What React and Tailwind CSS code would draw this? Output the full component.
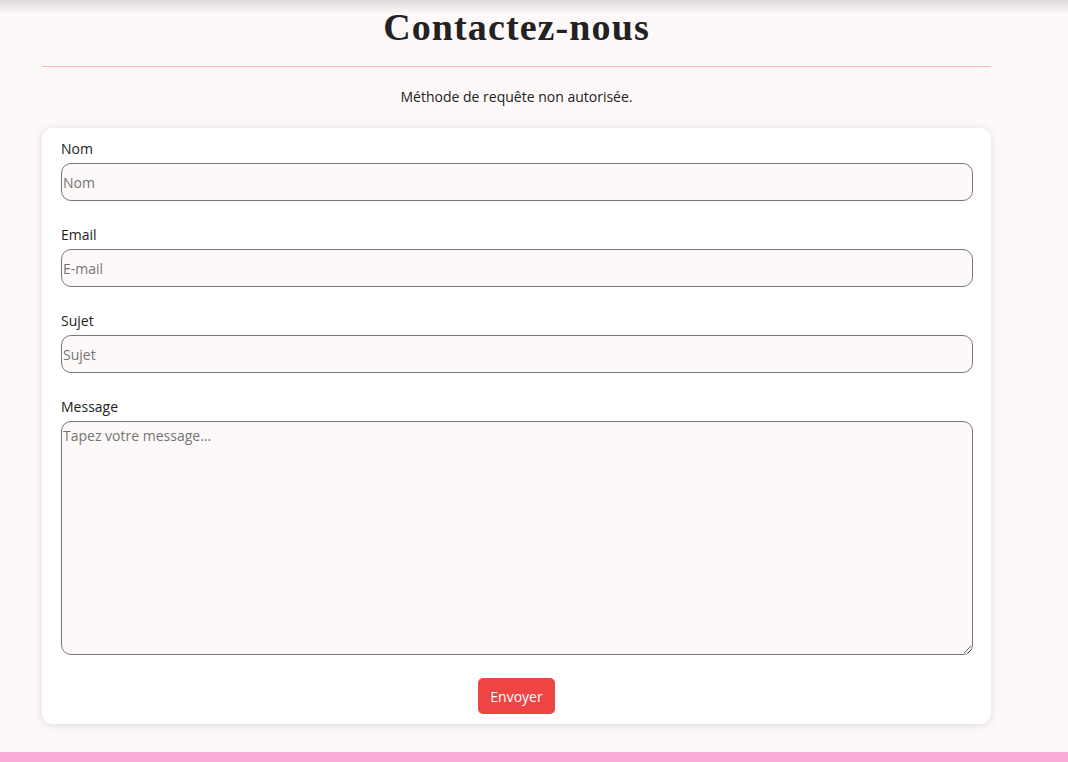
export default function App() {
  const body = { fontFamily: "'Open Sans', 'Noto Sans', sans-serif" };
  return (
    <div className="relative min-h-[762px] bg-[#fdf9f8] flex flex-col" style={body}>
      <div className="absolute left-0 right-0 top-0 h-[14px] bg-gradient-to-b from-[#dcdad9] to-[#fdf9f8]" />
      <div className="relative ml-[42px] w-[949px] flex flex-col flex-1">
        <h1
          className="text-center text-[38px] leading-[52px] font-bold tracking-[1.1px] text-[#222222] pt-[1px]"
          style={{ fontFamily: "'Liberation Serif', 'DejaVu Serif', serif" }}
        >
          Contactez-nous
        </h1>
        <div className="mt-[13px] h-px bg-[#f6b8b8]" />
        <p className="mt-[20px] text-center text-[14px] leading-[20px] text-[#222222]">
          Méthode de requête non autorisée.
        </p>
        <div className="mt-[21px] bg-white rounded-[10px] shadow-[0_1px_8px_rgba(0,0,0,0.13)] px-[19px] pt-[11px] pb-[10px]">
          {[
            ["Nom", "Nom"],
            ["Email", "E-mail"],
            ["Sujet", "Sujet"],
          ].map(([label, ph]) => (
            <div key={label} className="mb-[24px]">
              <div className="text-[14px] leading-[20px] text-[#222222] mb-[4px]">{label}</div>
              <input
                placeholder={ph}
                className="w-[912px] h-[38px] border border-[#777777] rounded-[10px] bg-[#fdf9f8] px-[1px] text-[14px] placeholder:text-[#757575] outline-none"
              />
            </div>
          ))}
          <div className="mt-[1px]">
            <div className="text-[14px] leading-[20px] text-[#222222] mb-[4px]">Message</div>
            <textarea
              placeholder="Tapez votre message..."
              className="block w-[912px] h-[234px] border border-[#777777] rounded-[10px] bg-[#fdf9f8] px-[1px] py-[3px] text-[14px] placeholder:text-[#757575] outline-none"
            />
          </div>
          <div className="flex justify-center mt-[23px]">
            <button className="w-[77px] h-[36px] rounded-[5px] bg-[#ef4444] text-white text-[14px]">
              Envoyer
            </button>
          </div>
        </div>
        <div className="flex-1" />
      </div>
      <div className="h-[28px]" />
      <div className="h-[10px] bg-[#f9acd8]" />
    </div>
  );
}
